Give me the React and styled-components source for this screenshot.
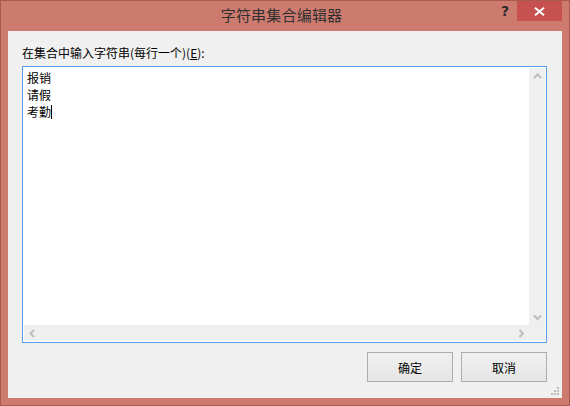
import React from "react";
import styled, { createGlobalStyle } from "styled-components";

const GlobalStyle = createGlobalStyle`
  html, body {
    margin: 0;
    padding: 0;
    background: #ffffff;
  }
  body {
    font-family: "Noto Sans CJK SC", "Liberation Sans", sans-serif;
  }
`;

const Window = styled.div`
  width: 570px;
  height: 406px;
  box-sizing: border-box;
  border: 1px solid #a9594d;
  background: #cd7b6f;
  display: flex;
  flex-direction: column;
`;

const TitleBar = styled.div`
  height: 29px;
  display: grid;
  grid-template-columns: 1fr auto 1fr;
  padding-right: 7px;
`;

const Title = styled.div`
  grid-column: 2;
  font-size: 15px;
  line-height: 28px;
  color: #2f2f2f;
  letter-spacing: 0.2px;
`;

const Controls = styled.div`
  grid-column: 3;
  display: flex;
  justify-content: flex-end;
  align-items: flex-start;
`;

const HelpButton = styled.div`
  width: 24px;
  height: 20px;
  font-family: "DejaVu Sans", sans-serif;
  font-weight: bold;
  font-size: 14px;
  line-height: 20px;
  color: #2a2a2a;
  text-align: center;
`;

const CloseButton = styled.div`
  width: 45px;
  height: 20px;
  background: #c75050;
  display: flex;
  align-items: center;
  justify-content: center;
`;

const Client = styled.div`
  flex: 1;
  margin: 1px 7px 7px 7px;
  background: #f0f0f0;
  padding: 14px 15px 0 14px;
  display: flex;
  flex-direction: column;
`;

const Label = styled.div`
  font-size: 12px;
  line-height: 16px;
  color: #000;
  margin-bottom: 5px;
  u {
    text-decoration: underline;
  }
`;

const EditBox = styled.div`
  width: 525px;
  height: 277px;
  box-sizing: border-box;
  border: 1px solid #569de5;
  background: #fff;
  padding: 1px;
  display: grid;
  grid-template-columns: 1fr 16px;
  grid-template-rows: 1fr 16px;
`;

const TextArea = styled.div`
  padding: 1px 3px;
  font-size: 12px;
  line-height: 17px;
  color: #000;
`;

const Line = styled.div`
  display: flex;
  align-items: center;
`;

const Caret = styled.span`
  display: inline-block;
  width: 1px;
  height: 14px;
  background: #000;
`;

const ScrollBar = styled.div`
  background: #efefef;
  display: flex;
  flex-direction: ${(p) => (p.vertical ? "column" : "row")};
  justify-content: space-between;
  align-items: center;
`;

const ScrollCorner = styled.div`
  background: #efefef;
`;

const Arrow = styled.div`
  width: 16px;
  height: 16px;
  display: flex;
  align-items: center;
  justify-content: center;
`;

const Footer = styled.div`
  display: flex;
  justify-content: flex-end;
  gap: 8px;
  margin-top: 9px;
`;

const Button = styled.button`
  width: 86px;
  height: 30px;
  box-sizing: border-box;
  border: 1px solid #acacac;
  background: linear-gradient(#f0f0f0, #e5e5e5);
  font-family: "Noto Sans CJK SC", "Liberation Sans", sans-serif;
  font-size: 12px;
  color: #000;
  padding: 0;
`;

const BottomRow = styled.div`
  flex: 1;
  display: flex;
  justify-content: flex-end;
  align-items: flex-end;
  margin-right: -13px;
  padding-bottom: 2px;
`;

const Chevron = ({ dir }) => {
  const paths = {
    up: "M1 5 L4.5 1.5 L8 5",
    down: "M1 1.5 L4.5 5 L8 1.5",
    left: "M5 1 L1.5 4.5 L5 8",
    right: "M1.5 1 L5 4.5 L1.5 8",
  };
  const vertical = dir === "up" || dir === "down";
  return (
    <svg
      width={vertical ? 9 : 7}
      height={vertical ? 7 : 9}
      viewBox={vertical ? "0 0 9 7" : "0 0 7 9"}
    >
      <path d={paths[dir]} fill="none" stroke="#bdbdbd" strokeWidth="2" />
    </svg>
  );
};

const Grip = () => (
  <svg width="9" height="9" viewBox="0 0 9 9">
    {[
      [6, 0],
      [3, 3],
      [6, 3],
      [0, 6],
      [3, 6],
      [6, 6],
    ].map(([x, y], i) => (
      <rect key={i} x={x} y={y} width="2" height="2" fill="#bcbcbc" />
    ))}
  </svg>
);

export default function App() {
  const items = ["报销", "请假", "考勤"];
  return (
    <>
      <GlobalStyle />
      <Window>
        <TitleBar>
          <Title>字符串集合编辑器</Title>
          <Controls>
            <HelpButton>?</HelpButton>
            <CloseButton>
              <svg width="11" height="9" viewBox="0 0 11 9">
                <path
                  d="M1 0.8 L10 8.2 M10 0.8 L1 8.2"
                  stroke="#fff"
                  strokeWidth="2"
                />
              </svg>
            </CloseButton>
          </Controls>
        </TitleBar>
        <Client>
          <Label>
            在集合中输入字符串(每行一个)(<u>E</u>):
          </Label>
          <EditBox>
            <TextArea>
              {items.map((t, i) => (
                <Line key={t}>
                  {t}
                  {i === items.length - 1 && <Caret />}
                </Line>
              ))}
            </TextArea>
            <ScrollBar vertical>
              <Arrow>
                <Chevron dir="up" />
              </Arrow>
              <Arrow>
                <Chevron dir="down" />
              </Arrow>
            </ScrollBar>
            <ScrollBar>
              <Arrow>
                <Chevron dir="left" />
              </Arrow>
              <Arrow>
                <Chevron dir="right" />
              </Arrow>
            </ScrollBar>
            <ScrollCorner />
          </EditBox>
          <Footer>
            <Button>确定</Button>
            <Button>取消</Button>
          </Footer>
          <BottomRow>
            <Grip />
          </BottomRow>
        </Client>
      </Window>
    </>
  );
}
